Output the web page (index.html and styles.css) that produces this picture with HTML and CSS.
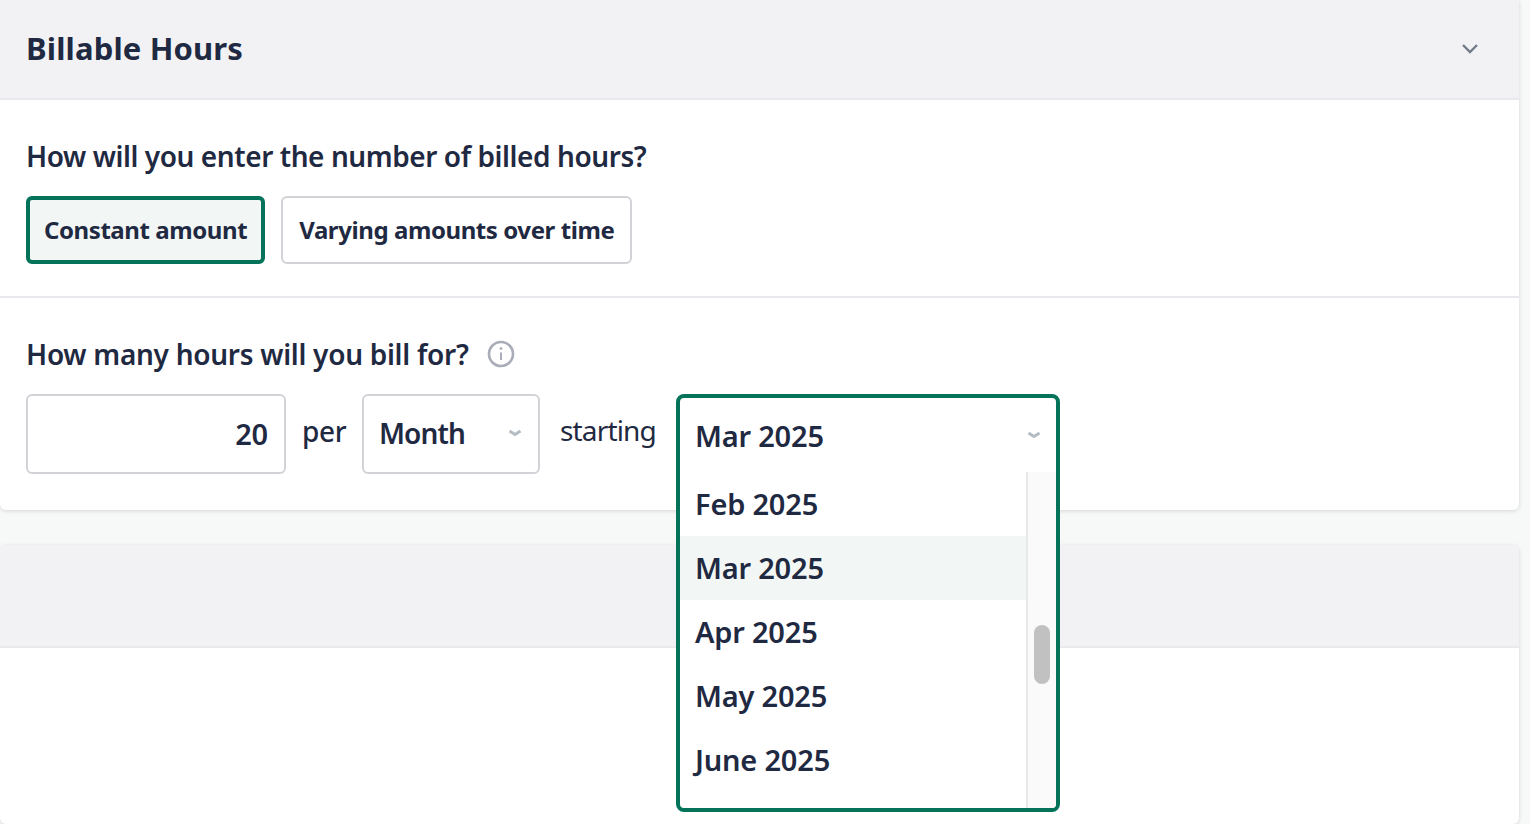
FILE: index.html
```html
<!DOCTYPE html>
<html lang="en">
<head>
  <meta http-equiv="Content-Type" content="text/html;charset=UTF-8">
  <meta name="viewport" content="width=device-width, initial-scale=1.0">
  <link rel="stylesheet" href="styles.css">
</head>
<body>
  <div class="page">
    <div class="card card-first">
      <div class="card-header">
        <h2 class="card-title">Billable Hours</h2>
        <svg class="header-chevron" width="18" height="12" viewBox="0 0 18 12" fill="none">
          <path d="M2 3 9 10l7-7" stroke="#737a8a" stroke-width="2.4"/>
        </svg>
      </div>

      <div class="section section-entry">
        <div class="question question-long">How will you enter the number of billed hours?</div>
        <div class="choice-row">
          <button class="choice choice-selected">Constant amount</button>
          <button class="choice">Varying amounts over time</button>
        </div>
      </div>

      <div class="section section-hours">
        <div class="question">
          How many hours will you bill for?
          <svg class="info-icon" width="28" height="28" viewBox="0 0 28 28" fill="none">
            <circle cx="14" cy="14" r="12" stroke="#a9adb8" stroke-width="2.6"/>
            <path d="M14 12.5v7.5" stroke="#a9adb8" stroke-width="2"/>
            <circle cx="14" cy="8.6" r="1.4" fill="#a9adb8"/>
          </svg>
        </div>
        <div class="hours-row">
          <div class="field field-number">20</div>
          <span class="word word-per">per</span>
          <div class="field field-select">
            Month
            <svg class="select-chevron" width="14" height="8" viewBox="0 0 14 8" fill="none">
              <path d="M1.5 2 7 5.5 12.5 2" stroke="#b4bcc4" stroke-width="3"/>
            </svg>
          </div>
          <span class="word word-starting">starting</span>
          <div class="dropdown">
            <div class="dropdown-panel">
              <div class="dropdown-value">
                Mar 2025
                <svg class="select-chevron" width="14" height="8" viewBox="0 0 14 8" fill="none">
                  <path d="M1.5 2 7 5.5 12.5 2" stroke="#b4bcc4" stroke-width="3"/>
                </svg>
              </div>
              <div class="dropdown-body">
                <ul class="option-list">
                  <li class="option">Feb 2025</li>
                  <li class="option option-active">Mar 2025</li>
                  <li class="option">Apr 2025</li>
                  <li class="option">May 2025</li>
                  <li class="option">June 2025</li>
                </ul>
                <div class="scroll-track"><div class="scroll-thumb"></div></div>
              </div>
            </div>
          </div>
        </div>
      </div>
    </div>

    <div class="card card-second">
      <div class="card-header card-header-empty"></div>
      <div class="card-fill"></div>
    </div>
  </div>
</body>
</html>
```

FILE: styles.css
```css
* {
  margin: 0;
  padding: 0;
  box-sizing: border-box;
}

html, body {
  height: 100%;
  overflow: hidden;
  background: #f7f9f8;
  font-family: "Noto Sans", "Lato", sans-serif;
  color: #1f2a42;
}

.page {
  display: flex;
  flex-direction: column;
  gap: 35px;
  width: 1519px;
  height: 824px;
}

.card {
  background: #fff;
  border-radius: 6px;
  box-shadow: 0 1px 4px rgba(0, 0, 0, 0.14);
}

.card-first {
  border-radius: 0 0 6px 6px;
}

.card-second {
  flex: 1;
  overflow: hidden;
}

.card-header {
  display: flex;
  justify-content: space-between;
  align-items: center;
  height: 100px;
  padding: 0 40px 2px 26px;
  background: #f2f2f5;
  border-bottom: 2px solid #e9e9ed;
}

.card-header-empty {
  height: 103px;
}

.card-title {
  font-size: 31px;
  font-weight: 700;
  line-height: 40px;
  letter-spacing: 0.15px;
}

.section {
  padding: 0 26px;
}

.section-entry {
  height: 198px;
  padding-top: 38px;
  border-bottom: 2px solid #e9e9ed;
}

.section-hours {
  height: 212px;
  padding-top: 38px;
}

.question {
  display: flex;
  align-items: center;
  gap: 18px;
  height: 36px;
  font-size: 28px;
  font-weight: 600;
  letter-spacing: -0.28px;
}

.question-long {
  letter-spacing: -0.43px;
}

.choice-row {
  display: flex;
  gap: 16px;
  margin-top: 22px;
}

.choice {
  height: 68px;
  padding: 0 16px 2px;
  background: #fff;
  border: 2px solid #d2d2d7;
  border-radius: 6px;
  font-family: inherit;
  font-size: 24px;
  font-weight: 700;
  letter-spacing: -0.42px;
  color: #1f2a42;
}

.choice-selected {
  padding: 0 14px 2px;
  background: #f2f7f5;
  border: 4px solid #04735a;
}

.hours-row {
  display: flex;
  margin-top: 22px;
}

.field {
  display: flex;
  align-items: center;
  height: 80px;
  padding-bottom: 2px;
  background: #fff;
  border: 2px solid #d2d2d7;
  border-radius: 6px;
  font-size: 29px;
  font-weight: 600;
  letter-spacing: -0.2px;
}

.field-number {
  justify-content: flex-end;
  width: 260px;
  padding-right: 16px;
}

.field-select {
  justify-content: space-between;
  width: 178px;
  padding: 0 16px 2px 15px;
  font-size: 28px;
  letter-spacing: -0.9px;
}

.word {
  height: 80px;
  font-size: 28px;
  font-weight: 500;
  line-height: 74px;
  letter-spacing: -0.3px;
}

.word-per {
  width: 44px;
  margin: 0 16px;
}

.word-starting {
  width: 96px;
  margin: 0 20px;
  line-height: 72px;
  font-weight: 400;
  letter-spacing: -0.85px;
}

.dropdown {
  position: relative;
  width: 384px;
  height: 80px;
}

.dropdown-panel {
  position: absolute;
  top: 0;
  left: 0;
  width: 384px;
  height: 418px;
  background: #fff;
  border: 4px solid #04735a;
  border-radius: 8px;
  overflow: hidden;
}

.dropdown-value {
  display: flex;
  justify-content: space-between;
  align-items: center;
  height: 74px;
  padding: 0 15px 0 15px;
  font-size: 29px;
  font-weight: 600;
  letter-spacing: -0.2px;
}

.dropdown-body {
  display: flex;
  height: 336px;
}

.option-list {
  flex: 1;
  list-style: none;
}

.option {
  height: 64px;
  padding-left: 15px;
  font-size: 29px;
  font-weight: 600;
  letter-spacing: -0.2px;
  line-height: 64px;
}

.option-active {
  background: #f2f7f5;
}

.scroll-track {
  width: 30px;
  padding: 153px 6px 0 6px;
  background: #fafafa;
  border-left: 2px solid #e8e8e8;
}

.scroll-thumb {
  width: 16px;
  height: 59px;
  background: #c1c1c1;
  border-radius: 8px;
}
```
